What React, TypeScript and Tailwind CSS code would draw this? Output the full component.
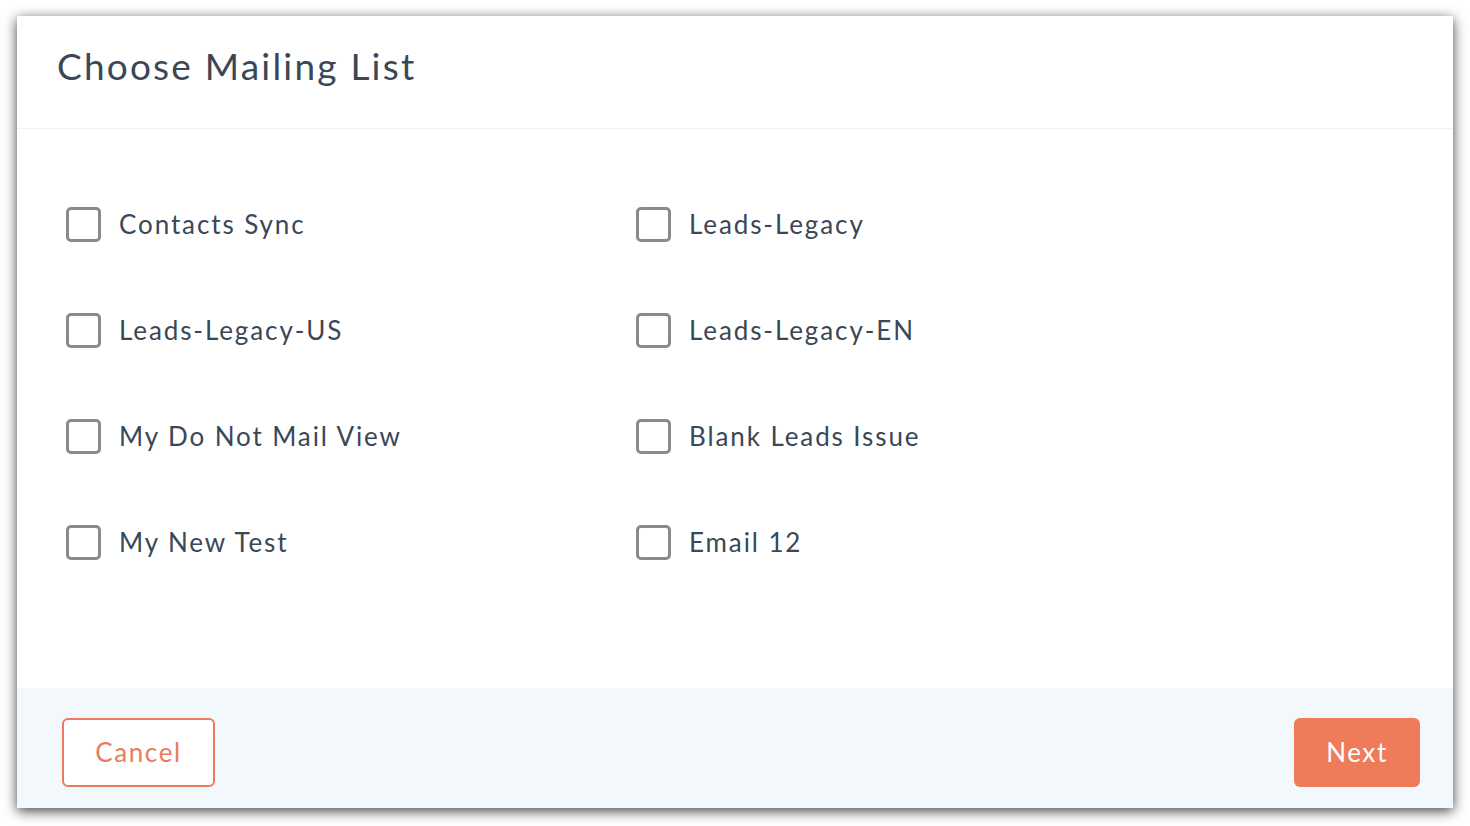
import React from "react";

const items = [
  "Contacts Sync",
  "Leads-Legacy",
  "Leads-Legacy-US",
  "Leads-Legacy-EN",
  "My Do Not Mail View",
  "Blank Leads Issue",
  "My New Test",
  "Email 12",
];

export default function App() {
  return (
    <div className="w-[1470px] h-[826px] bg-white pt-[16px] pl-[17px] font-['Lato',sans-serif]">
      <div className="w-[1436px] h-[792px] bg-white flex flex-col shadow-[0_3px_12px_rgba(0,0,0,0.75)]">
        <div className="h-[113px] border-b border-[#edf2f6] flex items-center pl-[40px] pb-[12px]">
          <h1 className="text-[37px] text-[#3a4757] tracking-[2.2px]">Choose Mailing List</h1>
        </div>
        <div className="flex-1 pt-[78px] pl-[49px]">
          <div className="grid grid-cols-[570px_570px] gap-y-[71px]">
            {items.map((t) => (
              <label key={t} className="flex items-center h-[35px] gap-[18px]">
                <span className="w-[35px] h-[35px] rounded-[5px] border-[3px] border-[#8a8a8a] bg-white shrink-0" />
                <span className="text-[26px] text-[#3a4757] tracking-[1.9px]">{t}</span>
              </label>
            ))}
          </div>
        </div>
        <div className="h-[120px] bg-[#f2f8fc] flex items-start justify-between pt-[30px] pl-[45px] pr-[33px]">
          <button className="w-[153px] h-[69px] rounded-[6px] border-2 border-[#ec7b5b] bg-white text-[#ec7b5b] text-[26px] tracking-[1.6px]">
            Cancel
          </button>
          <button className="w-[126px] h-[69px] rounded-[6px] bg-[#ee7c5b] text-white text-[26px] tracking-[1.6px]">
            Next
          </button>
        </div>
      </div>
    </div>
  );
}
